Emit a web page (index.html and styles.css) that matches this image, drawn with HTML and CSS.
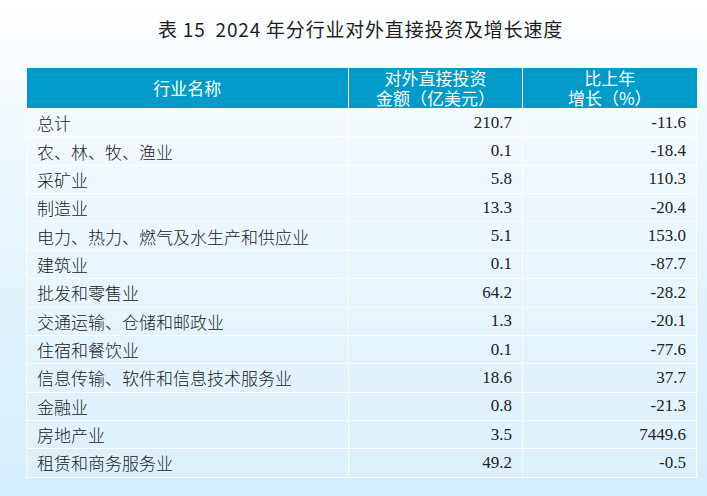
FILE: index.html
```html
<!DOCTYPE html>
<html lang="zh-CN">
<head>
<meta charset="utf-8">
<title>表 15 2024 年分行业对外直接投资及增长速度</title>
<link rel="stylesheet" href="styles.css">
</head>
<body>
<div class="page">
  <h1 class="title">表 15&nbsp; 2024 年分行业对外直接投资及增长速度</h1>
  <table class="data">
    <colgroup>
      <col class="c-name">
      <col class="c-num">
      <col class="c-num">
    </colgroup>
    <thead>
      <tr>
        <th>行业名称</th>
        <th><span class="hl">对外直接投资</span><span class="hl">金额（亿美元）</span></th>
        <th><span class="hl">比上年</span><span class="hl">增长（%）</span></th>
      </tr>
    </thead>
    <tbody>
      <tr><td class="name">总计</td><td class="num">210.7</td><td class="num">-11.6</td></tr>
      <tr><td class="name">农、林、牧、渔业</td><td class="num">0.1</td><td class="num">-18.4</td></tr>
      <tr><td class="name">采矿业</td><td class="num">5.8</td><td class="num">110.3</td></tr>
      <tr><td class="name">制造业</td><td class="num">13.3</td><td class="num">-20.4</td></tr>
      <tr><td class="name">电力、热力、燃气及水生产和供应业</td><td class="num">5.1</td><td class="num">153.0</td></tr>
      <tr><td class="name">建筑业</td><td class="num">0.1</td><td class="num">-87.7</td></tr>
      <tr><td class="name">批发和零售业</td><td class="num">64.2</td><td class="num">-28.2</td></tr>
      <tr><td class="name">交通运输、仓储和邮政业</td><td class="num">1.3</td><td class="num">-20.1</td></tr>
      <tr><td class="name">住宿和餐饮业</td><td class="num">0.1</td><td class="num">-77.6</td></tr>
      <tr><td class="name">信息传输、软件和信息技术服务业</td><td class="num">18.6</td><td class="num">37.7</td></tr>
      <tr><td class="name">金融业</td><td class="num">0.8</td><td class="num">-21.3</td></tr>
      <tr><td class="name">房地产业</td><td class="num">3.5</td><td class="num">7449.6</td></tr>
      <tr><td class="name">租赁和商务服务业</td><td class="num">49.2</td><td class="num">-0.5</td></tr>
    </tbody>
  </table>
</div>
</body>
</html>
```

FILE: styles.css
```css
html, body {
  margin: 0;
  padding: 0;
}
body {
  width: 707px;
  height: 496px;
  overflow: hidden;
  background: linear-gradient(180deg, #ffffff 0%, #eef8fe 30%, #d4edfb 100%);
  font-family: "Noto Sans CJK SC", "Noto Sans", sans-serif;
  color: #222;
}
.page {
  padding-top: 17px;
  padding-left: 26px;
}
.title {
  margin: 0 0 27px 0;
  width: 669px;
  height: 24px;
  line-height: 24px;
  font-size: 19px;
  font-weight: 400;
  letter-spacing: 0.8px;
  text-align: center;
  color: #1e1e1e;
}
.data {
  width: 670px;
  border-collapse: collapse;
  table-layout: fixed;
}
.c-name { width: 322px; }
.c-num { width: 174px; }
.data th {
  background: #009bc9;
  color: #fff;
  font-size: 17px;
  font-weight: 400;
  line-height: 20px;
  height: 40px;
  padding: 0;
  text-align: center;
  border-left: 1px solid #fff;
  border-right: 1px solid #fff;
}
.data th:first-child { border-left: none; }
.data th:last-child { border-right: none; }
.hl {
  display: block;
  line-height: 20px;
}
.data td {
  height: 27.36px;
  padding: 0;
  border: 1px solid #fff;
  background: rgba(255, 255, 255, 0.18);
  vertical-align: middle;
}
.data td.name {
  padding-left: 10px;
  font-size: 17px;
  font-weight: 300;
  color: #222;
  white-space: nowrap;
}
.data td.num {
  padding-right: 10px;
  text-align: right;
  font-family: "Liberation Serif", "Times New Roman", serif;
  font-size: 17px;
  color: #222;
}
```
